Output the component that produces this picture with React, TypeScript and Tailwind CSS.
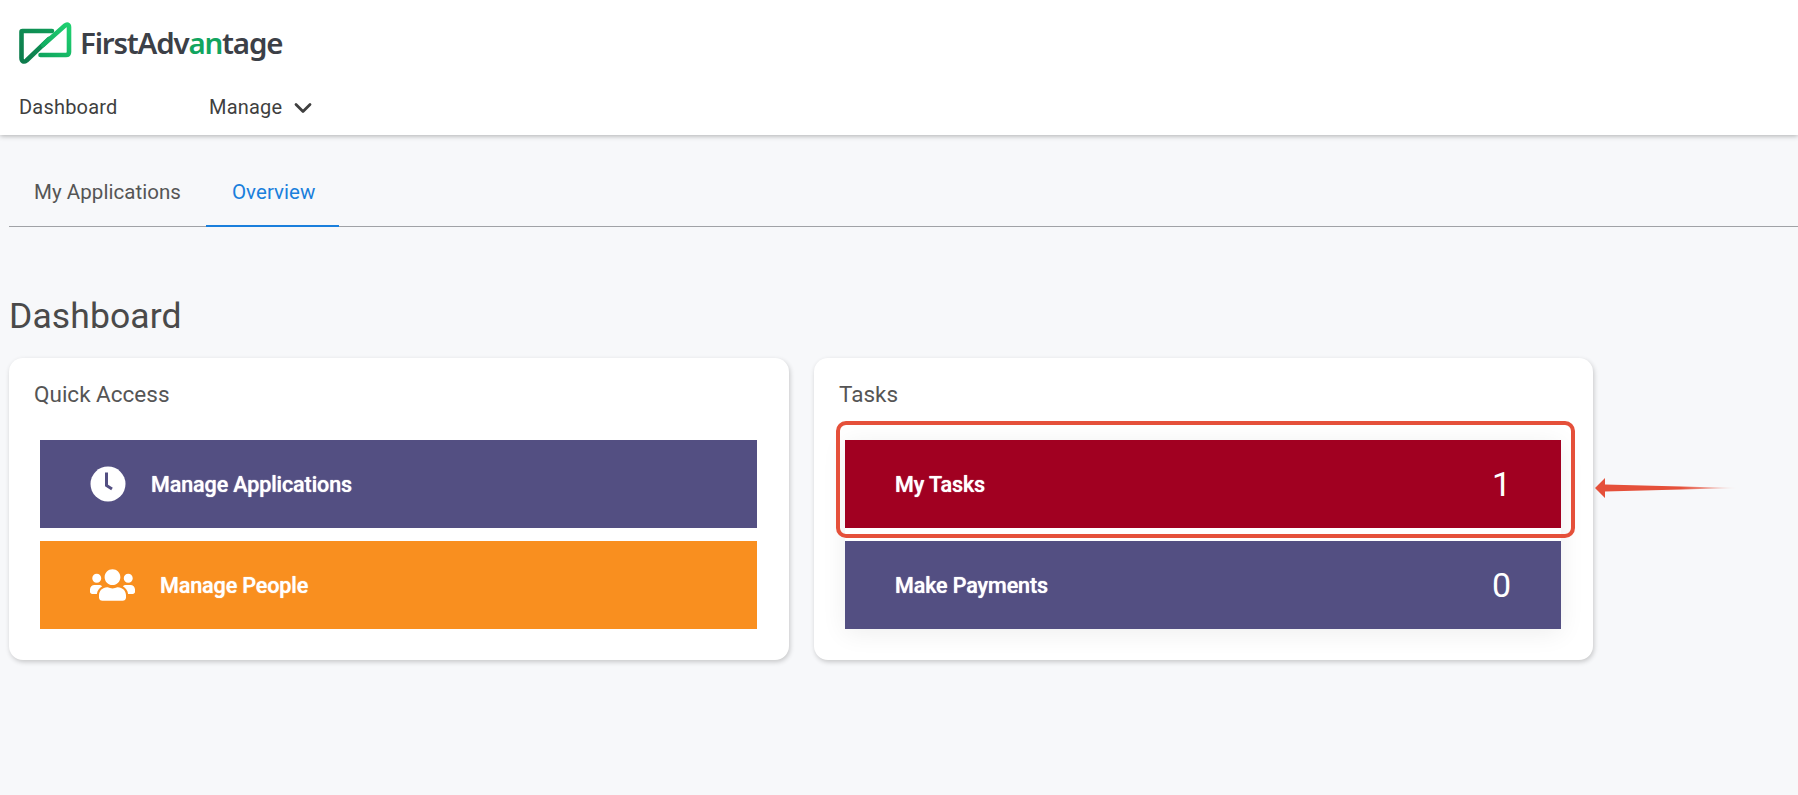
import { ChevronDown } from 'lucide-react'
import { FaUsers } from 'react-icons/fa'

const Logo = () => (
  <div className="flex items-center gap-[7px]">
    <svg width="54" height="44" viewBox="0 0 54 44" fill="none">
      <defs>
        <linearGradient id="fa-left" x1="0" y1="1" x2="1" y2="0">
          <stop offset="0" stopColor="#0d7a4c" />
          <stop offset="1" stopColor="#0f9a58" />
        </linearGradient>
        <linearGradient id="fa-right" x1="0" y1="1" x2="1" y2="0">
          <stop offset="0" stopColor="#0fa55e" />
          <stop offset="1" stopColor="#1fd070" />
        </linearGradient>
      </defs>
      <path
        d="M33 10H3.5C2.8 10 2.5 10.5 2.5 11V37C2.5 40.5 5 41.5 7.5 39.5L30 18"
        stroke="url(#fa-left)"
        strokeWidth="4.6"
        strokeLinejoin="round"
        strokeLinecap="round"
      />
      <path
        d="M24 24L46 4.5C48 2.8 50 3.5 50 6V31C50 33 49 34 47 34H21.5"
        stroke="url(#fa-right)"
        strokeWidth="4.6"
        strokeLinejoin="round"
        strokeLinecap="round"
      />
    </svg>
    <span className="font-['Noto_Sans',sans-serif] text-[29.5px] font-semibold leading-none tracking-[-1.2px] text-[#3c4047]">
      FirstAdv<span className="text-[#11a55f]">an</span>tage
    </span>
  </div>
)

const Bar = ({ color, label, count, icon, pad = 'pl-[50px]', gap = 'gap-4' }: { color: string; label: string; count?: string; icon?: React.ReactNode; pad?: string; gap?: string }) => (
  <div className={`h-[88px] flex items-center justify-between ${color} ${pad} pr-[50px] text-white`}>
    <div className={`flex items-center ${gap}`}>
      {icon}
      <span className="pt-[2px] text-[21.5px] font-medium tracking-[-0.1px] [text-shadow:0_0_1px_#ffffff]">{label}</span>
    </div>
    {count && <span className="text-[34px] leading-none">{count}</span>}
  </div>
)

const ClockIcon = () => (
  <svg width="36" height="36" viewBox="0 0 36 36">
    <circle cx="18" cy="18" r="17.5" fill="#ffffff" />
    <path d="M16.5 6.5V19.5L22 23" fill="none" stroke="#534f82" strokeWidth="3" />
  </svg>
)

export default function App() {
  return (
    <div className="min-h-[795px] bg-[#f7f8fa] font-['Roboto',sans-serif] text-[#444444]">
      <header className="h-[135px] bg-white px-[19px] pt-[21px] shadow-[0_1px_5px_rgba(0,0,0,0.3)]">
        <Logo />
        <nav className="mt-[26px] flex items-center text-[20px] text-[#3f3f3f]">
          <span className="w-[190px] tracking-[0.2px]">Dashboard</span>
          <span className="tracking-[0.2px]">Manage</span>
          <ChevronDown className="ml-[7px] mt-[3px] h-[28px] w-[28px]" strokeWidth={2.4} />
        </nav>
      </header>

      <main className="pl-[9px]">
        <div className="mt-[24px] flex h-[68px] items-end border-b border-[#a0a2a6] text-[20.5px]">
          <div className="flex h-[67px] items-center px-[25px] tracking-[0.05px] text-[#555555]">My Applications</div>
          <div className="flex h-[68px] translate-y-[1px] items-center border-b-2 border-[#1a7fdc] pl-[26px] pr-[24px] tracking-[0.05px] text-[#1a7fdc]">Overview</div>
        </div>

        <h1 className="mt-[67px] text-[35.5px] font-normal leading-[44px] tracking-[0.1px] text-[#4a4a4a]">Dashboard</h1>

        <div className="mt-[20px] flex gap-[25px]">
          <section className="h-[302px] w-[780px] rounded-[14px] bg-white pl-[31px] pr-[32px] shadow-[1px_2px_5px_rgba(0,0,0,0.2)]">
            <h2 className="ml-[-6px] pt-[22px] text-[22.5px] font-normal leading-[28px] text-[#555555]">Quick Access</h2>
            <div className="mt-[32px] flex flex-col gap-[13px]">
              <Bar color="bg-[#534f82]" label="Manage Applications" icon={<ClockIcon />} gap="gap-[25px]" />
              <Bar color="bg-[#f98f1f]" label="Manage People" icon={<FaUsers className="h-[36px] w-[45px] text-white" />} gap="gap-[25px]" />
            </div>
          </section>

          <section className="relative h-[302px] w-[779px] rounded-[14px] bg-white pl-[31px] pr-[32px] shadow-[1px_2px_5px_rgba(0,0,0,0.2)]">
            <h2 className="ml-[-6px] pt-[22px] text-[22.5px] font-normal leading-[28px] text-[#555555]">Tasks</h2>
            <div className="mt-[32px] flex flex-col gap-[13px] shadow-[0_4px_24px_rgba(0,0,0,0.07)]">
              <Bar color="bg-[#a10021]" label="My Tasks" count="1" />
              <Bar color="bg-[#534f82]" label="Make Payments" count="0" />
            </div>
            <div className="absolute left-[22px] top-[63px] h-[117px] w-[739px] rounded-[10px] border-[4px] border-[#e5503a]" />
            <svg className="absolute left-[780px] top-[115px]" width="146" height="30" viewBox="0 0 146 30">
              <defs>
                <linearGradient id="arrow-tail" x1="0" y1="0" x2="1" y2="0">
                  <stop offset="0" stopColor="#e5503a" />
                  <stop offset="0.6" stopColor="#e5503a" />
                  <stop offset="1" stopColor="#e5503a" stopOpacity="0" />
                </linearGradient>
              </defs>
              <path d="M1 15L11 5V11.5L144 15L11 18.5V25Z" fill="url(#arrow-tail)" />
            </svg>
          </section>
        </div>
      </main>
    </div>
  )
}
